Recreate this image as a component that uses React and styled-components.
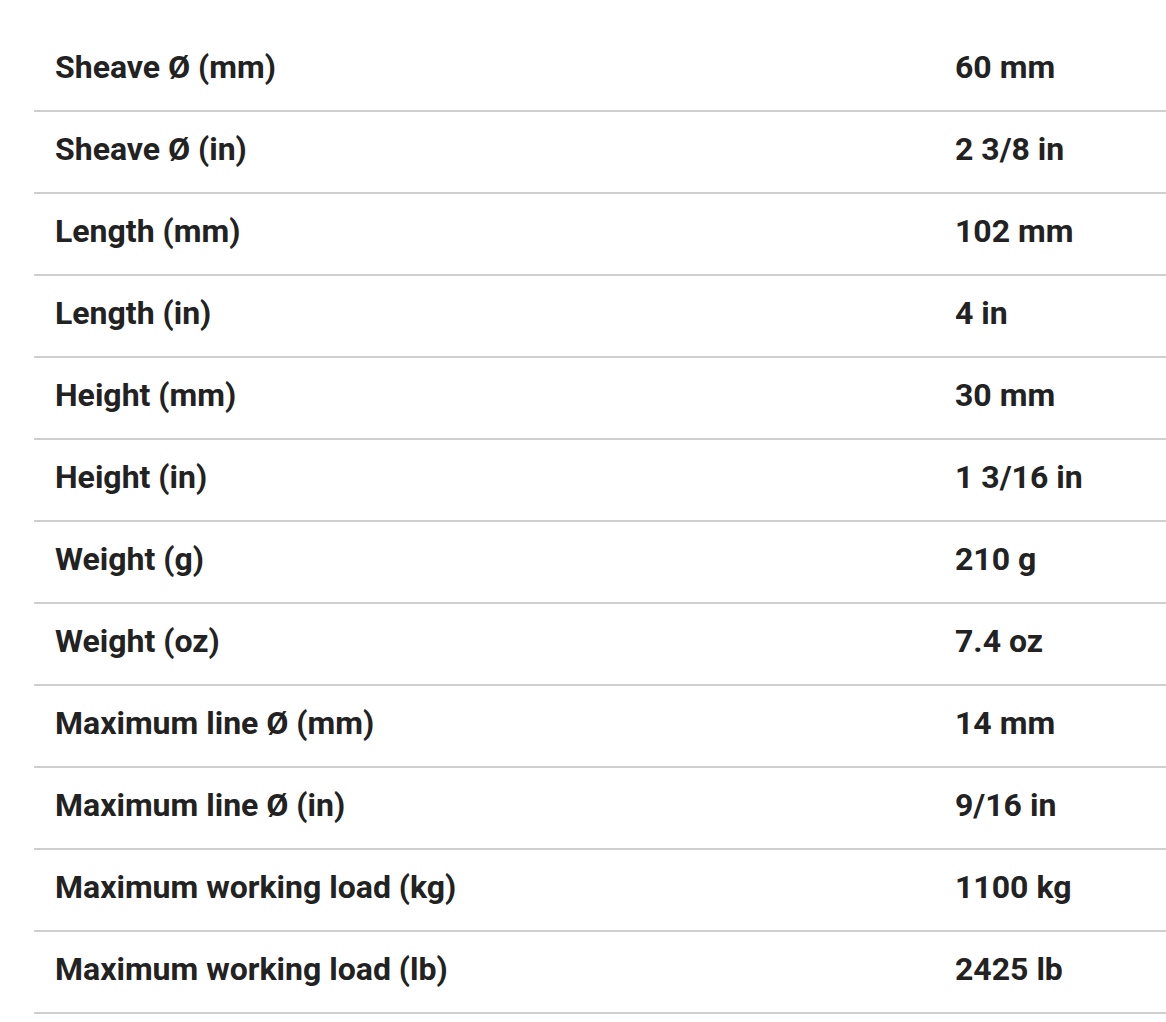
import React from "react";
import styled, { createGlobalStyle } from "styled-components";

const Global = createGlobalStyle`
  html, body { margin: 0; padding: 0; background: #fff; }
  body { font-family: Roboto, "Liberation Sans", sans-serif; }
`;

const Table = styled.div`
  margin: 30px 0 0 34px;
  width: 1132px;
  display: flex;
  flex-direction: column;
`;

const Row = styled.div`
  display: grid;
  grid-template-columns: 900px 1fr;
  align-items: center;
  box-sizing: content-box;
  height: 74px;
  padding-bottom: 6px;
  border-bottom: 2px solid #cfcfcf;
`;

const Cell = styled.div`
  padding-left: 21px;
  font-size: 32px;
  line-height: 1;
  font-weight: 700;
  color: #222;
  white-space: nowrap;
`;

const rows = [
  ["Sheave Ø (mm)", "60 mm"],
  ["Sheave Ø (in)", "2 3/8 in"],
  ["Length (mm)", "102 mm"],
  ["Length (in)", "4 in"],
  ["Height (mm)", "30 mm"],
  ["Height (in)", "1 3/16 in"],
  ["Weight (g)", "210 g"],
  ["Weight (oz)", "7.4 oz"],
  ["Maximum line Ø (mm)", "14 mm"],
  ["Maximum line Ø (in)", "9/16 in"],
  ["Maximum working load (kg)", "1100 kg"],
  ["Maximum working load (lb)", "2425 lb"],
];

export default function App() {
  return (
    <>
      <Global />
      <Table>
        {rows.map(([k, v]) => (
          <Row key={k}>
            <Cell>{k}</Cell>
            <Cell>{v}</Cell>
          </Row>
        ))}
      </Table>
    </>
  );
}
